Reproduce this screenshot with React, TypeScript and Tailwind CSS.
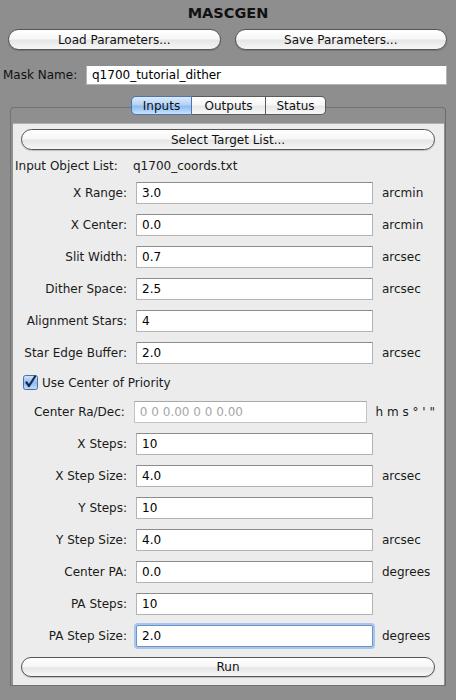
import React from "react";

const btn =
  "flex items-center justify-center rounded-full border border-[#555555] bg-[linear-gradient(to_bottom,#ffffff_0%,#f7f7f7_45%,#e6e6e6_55%,#f6f6f6_100%)] shadow-[0_1px_1px_rgba(0,0,0,0.18)] text-[12px] text-[#111]";

const field =
  "h-[22px] bg-white border border-[#b3b3b3] border-t-[#8c8c8c] flex items-center pl-[5px] text-[12px]";

function Row({
  label,
  value,
  unit,
  disabled,
  focused,
}: {
  label: string;
  value: string;
  unit?: string;
  disabled?: boolean;
  focused?: boolean;
}) {
  return (
    <div className="flex items-center h-[22px]">
      <div className="w-[114px] text-right text-[#1a1a1a]">{label}</div>
      <div
        className={
          focused
            ? "ml-[9px] w-[237px] h-[22px] bg-white border border-[#6b94cb] shadow-[0_0_0_2px_#a8c6ec] rounded-[2px] flex items-center pl-[5px] text-[12px]"
            : `ml-[9px] w-[237px] ${field} ${disabled ? "text-[#a6a6a6] border-[#c4c4c4] border-t-[#a9a9a9]" : "text-black"}`
        }
      >
        {value}
      </div>
      {unit && <div className="ml-[9px] text-[#1a1a1a] whitespace-nowrap">{unit}</div>}
    </div>
  );
}

export default function App() {
  return (
    <div className="w-[456px] h-[700px] bg-[#8e8e8e] overflow-hidden text-[12px] text-black font-['DejaVu_Sans',sans-serif] leading-none">
      <div className="h-[24px] pt-[5px] text-center font-bold text-[14.5px] leading-[16px] text-[#111]">
        MASCGEN
      </div>
      <div className="mt-[5px] flex pl-[8px] pr-[9px] gap-[14px]">
        <div className={`${btn} flex-1 h-[21px]`}>Load Parameters...</div>
        <div className={`${btn} flex-1 h-[21px]`}>Save Parameters...</div>
      </div>
      <div className="mt-[15px] flex items-center pl-[3px] pr-[9px] h-[20px]">
        <div className="w-[83px] text-[#111]">Mask Name:</div>
        <div className="flex-1 h-[20px] bg-white border border-[#b3b3b3] border-t-[#8c8c8c] flex items-center pl-[5px]">
          q1700_tutorial_dither
        </div>
      </div>
      <div className="mt-[11px] relative z-10 flex ml-[131px] h-[19px]">
        <div className="w-[61px] h-[19px] flex items-center justify-center rounded-l-[5px] border border-[#4d74ad] bg-[linear-gradient(to_bottom,#dcebfb_0%,#b3d3f6_45%,#8cbcf1_55%,#c9e3fc_100%)] text-[#111]">
          Inputs
        </div>
        <div className="w-[74px] h-[19px] flex items-center justify-center border-y border-r border-[#5a5a5a] bg-[linear-gradient(to_bottom,#ffffff_0%,#f7f7f7_45%,#e8e8e8_55%,#f7f7f7_100%)] text-[#111]">
          Outputs
        </div>
        <div className="w-[60px] h-[19px] flex items-center justify-center rounded-r-[5px] border-y border-r border-[#5a5a5a] bg-[linear-gradient(to_bottom,#ffffff_0%,#f7f7f7_45%,#e8e8e8_55%,#f7f7f7_100%)] text-[#111]">
          Status
        </div>
      </div>
      <div className="-mt-[8px] ml-[10px] w-[436px] h-[579px] border border-[#727272] border-r-[#6a6a6a] rounded-t-[4px] bg-[#8f8f8f] pt-[15px] pl-[2px] pr-[1px]">
        <div className="h-[562px] bg-[#ececec] border-t border-[#b0b0b0] flex flex-col pt-[5px] pl-[8px] pr-[9px]">
          <div className={`${btn} h-[21px]`}>Select Target List...</div>
          <div className="h-[32px] flex items-center -ml-[6px] text-[#1a1a1a]">
            <div className="w-[118px] shrink-0">Input Object List:</div>
            <div>q1700_coords.txt</div>
          </div>
          <div className="-ml-[8px] flex flex-col gap-[10px]">
            <Row label="X Range:" value="3.0" unit="arcmin" />
            <Row label="X Center:" value="0.0" unit="arcmin" />
            <Row label="Slit Width:" value="0.7" unit="arcsec" />
            <Row label="Dither Space:" value="2.5" unit="arcsec" />
            <Row label="Alignment Stars:" value="4" />
            <Row label="Star Edge Buffer:" value="2.0" unit="arcsec" />
            <div className="h-[17px] flex items-center pl-[10px]">
              <svg width="15" height="15" viewBox="0 0 15 15">
                <defs>
                  <linearGradient id="cb" x1="0" y1="0" x2="0" y2="1">
                    <stop offset="0" stopColor="#d3e6fb" />
                    <stop offset="0.5" stopColor="#8fbef2" />
                    <stop offset="1" stopColor="#c2ddfa" />
                  </linearGradient>
                </defs>
                <rect x="0.5" y="0.5" width="14" height="14" rx="2" fill="url(#cb)" stroke="#4b6fa3" />
                <path d="M3.5 7.5 L6 11 L12 1.5" fill="none" stroke="#1a2a4a" strokeWidth="2.2" strokeLinecap="round" strokeLinejoin="round" />
              </svg>
              <span className="ml-[4px] text-[#1a1a1a]">Use Center of Priority</span>
            </div>
            <Row label="Center Ra/Dec:" value="0 0 0.00 0 0 0.00" unit={"h m s ° ' \""} disabled />
            <Row label="X Steps:" value="10" />
            <Row label="X Step Size:" value="4.0" unit="arcsec" />
            <Row label="Y Steps:" value="10" />
            <Row label="Y Step Size:" value="4.0" unit="arcsec" />
            <Row label="Center PA:" value="0.0" unit="degrees" />
            <Row label="PA Steps:" value="10" />
            <Row label="PA Step Size:" value="2.0" unit="degrees" focused />
          </div>
          <div className={`${btn} h-[20px] mt-[10px]`}>Run</div>
        </div>
      </div>
    </div>
  );
}
